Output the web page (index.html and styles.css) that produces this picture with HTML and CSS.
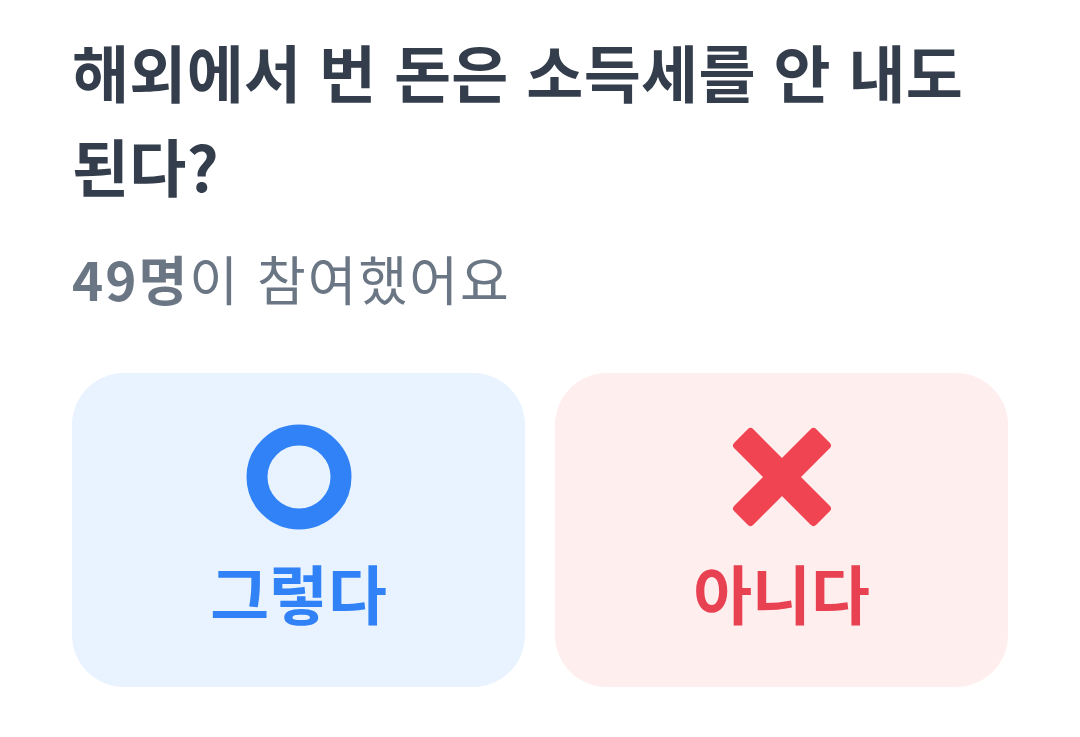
FILE: index.html
```html
<!DOCTYPE html>
<html lang="ko">
<head>
    <meta charset="UTF-8">
    <meta name="viewport" content="width=device-width, initial-scale=1.0">
    <title>OX 퀴즈</title>
    <link rel="stylesheet" href="styles.css">
</head>
<body>
    <div class="quiz">
        <h1 class="question">해외에서 번 돈은 소득세를 안 내도 된다?</h1>
        <p class="count"><strong>49명</strong>이 참여했어요</p>
        <div class="answers">
            <button class="answer answer-yes">
                <svg class="icon" width="106" height="106" viewBox="0 0 106 106">
                    <circle cx="53" cy="53" r="42" fill="none" stroke="#3182f6" stroke-width="21"/>
                </svg>
                <span class="label">그렇다</span>
            </button>
            <button class="answer answer-no">
                <svg class="icon" width="106" height="106" viewBox="0 0 106 106">
                    <g transform="rotate(45 53 53)" fill="#f04452">
                        <rect x="39.5" y="-5" width="27" height="116" rx="4"/>
                        <rect x="-5" y="39.5" width="116" height="27" rx="4"/>
                    </g>
                </svg>
                <span class="label">아니다</span>
            </button>
        </div>
    </div>
</body>
</html>
```

FILE: styles.css
```css
body {
    margin: 0;
    padding: 0;
    background: #fff;
    font-family: "Noto Sans CJK KR", "Noto Sans", sans-serif;
}
.quiz {
    padding: 24px 72px 0 72px;
}
.question {
    margin: 0;
    font-size: 62px;
    line-height: 94px;
    font-weight: 700;
    color: #333d4b;
    letter-spacing: 0.3px;
}
.count {
    margin: 34px 0 0 0;
    font-size: 53px;
    line-height: 64px;
    color: #6b7684;
    letter-spacing: 2px;
}
.count strong {
    font-weight: 700;
}
.answers {
    display: grid;
    grid-template-columns: 1fr 1fr;
    gap: 30px;
    margin-top: 63px;
}
.answer {
    height: 314px;
    border: none;
    border-radius: 52px;
    display: flex;
    flex-direction: column;
    align-items: center;
    justify-content: center;
    padding: 0 0 10px 0;
    font-family: inherit;
    cursor: pointer;
}
.answer-yes {
    background: #e8f3ff;
    color: #3182f6;
}
.answer-no {
    background: #ffeeee;
    color: #e84252;
}
.icon {
    display: block;
}
.label {
    margin-top: 26px;
    font-size: 64px;
    line-height: 70px;
    font-weight: 700;
}
```
